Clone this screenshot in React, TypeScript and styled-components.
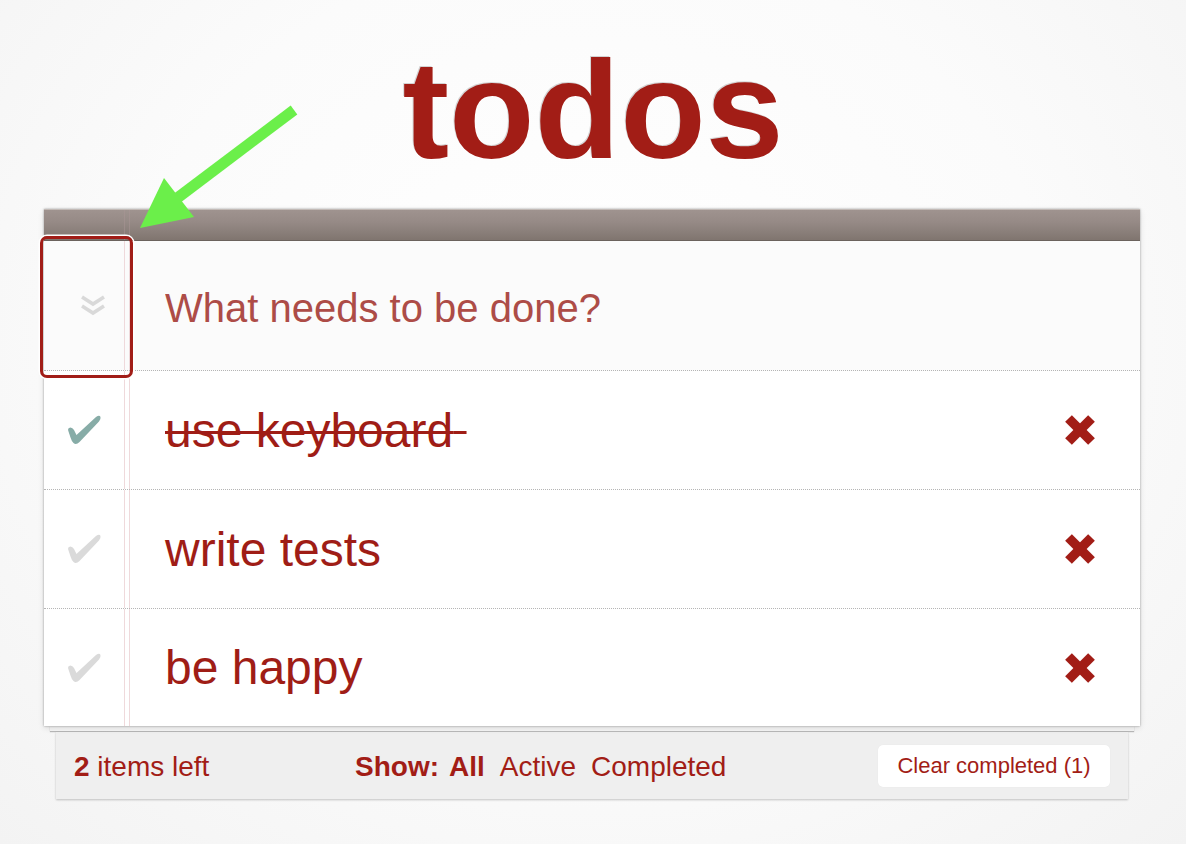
import React from "react";
import styled, { createGlobalStyle } from "styled-components";

const Global = createGlobalStyle`
  html, body { margin: 0; padding: 0; }
  body {
    background: #f7f7f7;
    font-family: "Liberation Sans", Arial, Helvetica, sans-serif;
    -webkit-font-smoothing: antialiased;
  }
`;

const RED = "#a21d16";

const Page = styled.div`
  position: relative;
  width: 1186px;
  height: 844px;
  padding-top: 40px;
  box-sizing: border-box;
  background: radial-gradient(ellipse at 50% 40%, #ffffff 0%, #fbfbfb 55%, #f3f3f3 100%);
  overflow: hidden;
`;

const Title = styled.h1`
  margin: 0;
  text-align: center;
  font-size: 140px;
  line-height: 140px;
  height: 140px;
  font-weight: bold;
  color: ${RED};
  text-shadow: -1px -1px 0 rgba(0, 0, 0, 0.16), 0 1px 0 rgba(255, 255, 255, 0.8);
`;

const Stack = styled.div`
  width: 1096px;
  margin: 29px 0 0 44px;
  position: relative;
`;

const Card = styled.section`
  position: relative;
  background: #fff;
  box-shadow: 0 0 2px rgba(0, 0, 0, 0.35), 0 2px 6px rgba(0, 0, 0, 0.12);
`;

const HeaderBar = styled.div`
  height: 32px;
  border-top: 1px solid #c2bab6;
  border-bottom: 1px solid #6b625d;
  box-sizing: border-box;
  background:
    linear-gradient(to right, transparent 80px, rgba(170, 150, 150, 0.5) 80px, rgba(170, 150, 150, 0.5) 81px, transparent 81px, transparent 85px, rgba(170, 150, 150, 0.5) 85px, rgba(170, 150, 150, 0.5) 86px, transparent 86px),
    linear-gradient(#9f938f 0%, #968a86 40%, #8b807b 70%, #80756f 100%);
`;

const lines = `linear-gradient(to right, transparent 80px, #efd9db 80px, #efd9db 81px, transparent 81px, transparent 85px, #efd9db 85px, #efd9db 86px, transparent 86px)`;

const Row = styled.div<{ $h: number; $last?: boolean; $tint?: boolean }>`
  display: grid;
  grid-template-columns: 86px 1fr 120px;
  align-items: center;
  height: ${(p) => p.$h}px;
  background: ${(p) => (p.$tint ? "#fbfbfb" : "#ffffff")};
  border-bottom: ${(p) => (p.$last ? "none" : "1px dotted #b5b5b5")};
`;

const ToggleCell = styled.div`
  height: 100%;
  display: flex;
  align-items: center;
  justify-content: center;
  padding-right: 6px;
  box-sizing: border-box;
  background: ${lines};
`;

const ChevronCell = styled(ToggleCell)`
  padding-right: 0;
  padding-left: 12px;
`;

const NewTodo = styled.input`
  border: none;
  outline: none;
  background: transparent;
  font-family: "Liberation Sans", Arial, Helvetica, sans-serif;
  font-size: 40px;
  padding: 6px 0 0 35px;
  color: ${RED};
  width: 100%;
  grid-column: 2 / 4;
  &::placeholder {
    color: #ad4c47;
    opacity: 1;
  }
`;

const Label = styled.span<{ $done?: boolean }>`
  padding-left: 35px;
  font-size: 48px;
  color: #9f1d16;
  text-decoration: ${(p) => (p.$done ? "line-through" : "none")};
  text-decoration-thickness: 3px;
  white-space: pre;
  &::after {
    content: "${(p) => (p.$done ? "\\00a0" : "")}";
  }
`;

const DeleteCell = styled.div`
  display: flex;
  justify-content: center;
  align-items: center;
`;

const Annotation = styled.div`
  position: absolute;
  left: -4px;
  top: 27px;
  width: 93px;
  height: 142px;
  box-sizing: border-box;
  border: 3px solid #a11d17;
  border-radius: 7px;
  box-shadow: 0 0 0 1.5px #ffffff;
  pointer-events: none;
`;

const PaperEdge = styled.div`
  height: 5px;
  margin: 0 6px;
  background: #f6f6f6;
  box-shadow: 0 1px 1px rgba(0, 0, 0, 0.25);
`;

const Footer = styled.footer`
  margin: 1px 12px 0;
  height: 67px;
  background: #efefef;
  box-shadow: 0 1px 2px rgba(0, 0, 0, 0.22);
  display: grid;
  grid-template-columns: 281px 1fr auto;
  align-items: center;
  padding: 0 18px;
  color: ${RED};
  font-size: 28px;
`;

const Count = styled.span`
  padding-top: 3px;
  strong { font-weight: bold; }
`;

const Filters = styled.div`
  display: flex;
  align-items: center;
  gap: 15px;
  padding-top: 3px;
`;

const Show = styled.span<{ $bold?: boolean }>`
  font-weight: ${(p) => (p.$bold ? "bold" : "normal")};
`;

const ShowLabel = styled.span`
  font-weight: bold;
  margin-right: -5px;
`;

const ClearButton = styled.button`
  width: 232px;
  height: 42px;
  border: none;
  border-radius: 5px;
  background: #ffffff;
  color: ${RED};
  font-family: "Liberation Sans", Arial, Helvetica, sans-serif;
  font-size: 22px;
  box-shadow: 0 0 1px rgba(0, 0, 0, 0.08);
  padding: 0;
  margin-top: 1px;
`;

const ArrowLayer = styled.svg`
  position: absolute;
  left: 0;
  top: 0;
  pointer-events: none;
`;

const Check = ({ done }: { done: boolean }) => (
  <svg width="36" height="32" viewBox="0 0 36 32">
    <path
      d="M2.5 17.5 Q1 14 4.5 13.5 Q6.5 13.5 8 16 L10.5 21 L30 3 Q33.5 0.5 34.5 3 Q35 5 33 7.5 L13.5 28 Q10 31.5 7.5 29 Q5.5 27 4.5 23.5 Z"
      fill={done ? "#87aca7" : "#dadada"}
    />
  </svg>
);

const Cross = () => (
  <svg width="30" height="30" viewBox="0 0 30 30">
    <g stroke="#a21d16" strokeWidth="9.5" strokeLinecap="butt">
      <line x1="3.5" y1="3.5" x2="26.5" y2="26.5" />
      <line x1="26.5" y1="3.5" x2="3.5" y2="26.5" />
    </g>
  </svg>
);

const Chevrons = () => (
  <svg width="26" height="24" viewBox="0 0 26 24">
    <g fill="none" stroke="#d9d9d9" strokeWidth="3.6" strokeLinejoin="miter">
      <polyline points="2,3 13,10 24,3" />
      <polyline points="2,12 13,19 24,12" />
    </g>
  </svg>
);

const todos = [
  { text: "use keyboard", done: true },
  { text: "write tests", done: false },
  { text: "be happy", done: false },
];

export default function App() {
  return (
    <>
      <Global />
      <Page>
        <Title>todos</Title>
        <Stack>
          <Card>
            <HeaderBar />
            <Row $h={129} $tint>
              <ChevronCell>
                <Chevrons />
              </ChevronCell>
              <NewTodo placeholder="What needs to be done?" />
            </Row>
            {todos.map((t, i) => (
              <Row key={t.text} $h={i === todos.length - 1 ? 117 : 118} $last={i === todos.length - 1}>
                <ToggleCell>
                  <Check done={t.done} />
                </ToggleCell>
                <Label $done={t.done}>{t.text}</Label>
                <DeleteCell>
                  <Cross />
                </DeleteCell>
              </Row>
            ))}
            <Annotation />
          </Card>
          <PaperEdge />
          <Footer>
            <Count>
              <strong>2</strong> items left
            </Count>
            <Filters>
              <ShowLabel>Show:</ShowLabel>
              <Show $bold>All</Show>
              <Show>Active</Show>
              <Show>Completed</Show>
            </Filters>
            <ClearButton>Clear completed (1)</ClearButton>
          </Footer>
        </Stack>
        <ArrowLayer width="1186" height="844" viewBox="0 0 1186 844">
          <line x1="294" y1="110" x2="176" y2="199" stroke="#6bef4a" strokeWidth="11" />
          <polygon points="140,228 164,178 194,217" fill="#6bef4a" />
        </ArrowLayer>
      </Page>
    </>
  );
}
